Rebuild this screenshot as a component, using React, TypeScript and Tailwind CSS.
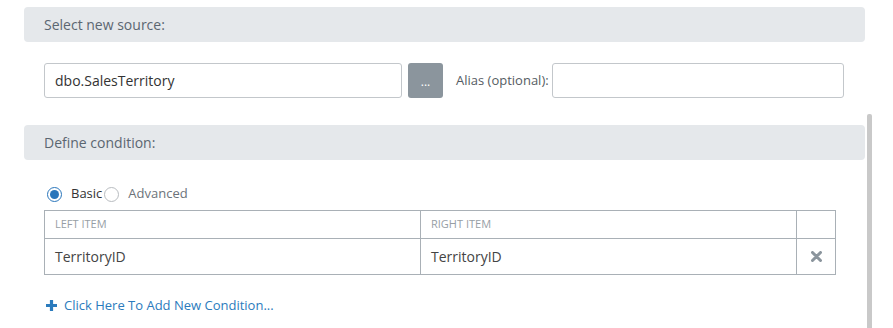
export default function App() {
  const font = { fontFamily: '"Open Sans", "Liberation Sans", sans-serif' };
  return (
    <div className="relative w-[893px] h-[328px] overflow-hidden bg-white" style={font}>
      <div className="w-[841px] ml-[24px]">
        <div className="mt-[7px] h-[35px] rounded-[4px] bg-[#e5e8eb] pl-[20px] flex items-center text-[14px] text-[#5b6671]">
          Select new source:
        </div>

        <div className="mt-[21px] flex items-center pl-[20px]">
          <div className="w-[358px] h-[35px] border border-[#c3c7cb] rounded-[3px] pl-[10px] flex items-center text-[14px] text-[#333]">
            dbo.SalesTerritory
          </div>
          <button className="ml-[6px] w-[35px] h-[35px] rounded-[3px] bg-[#8b959d] text-white text-[12px] leading-none flex items-center justify-center pt-[3px]">
            ...
          </button>
          <span className="ml-[13px] text-[13px] text-[#555c63]">Alias (optional):</span>
          <div className="ml-[3px] w-[292px] h-[35px] border border-[#c3c7cb] rounded-[3px]" />
        </div>

        <div className="mt-[27px] h-[35px] rounded-[4px] bg-[#e5e8eb] pl-[20px] flex items-center text-[14px] text-[#5b6671]">
          Define condition:
        </div>

        <div className="mt-[26px] ml-[23px] flex items-center h-[16px] text-[13px]">
          <span className="w-[15px] h-[15px] rounded-full border border-[#2a76bb] flex items-center justify-center">
            <span className="w-[9px] h-[9px] rounded-full bg-[#2a76bb]" />
          </span>
          <span className="ml-[9px] text-[#333]">Basic</span>
          <span className="ml-[2px] w-[15px] h-[15px] rounded-full border border-[#b8bcc0]" />
          <span className="ml-[9px] text-[#6c737a]">Advanced</span>
        </div>

        <div className="mt-[8px] ml-[20px] w-[792px] border border-[#a9b0b6]">
          <div className="flex h-[28px] border-b border-[#a9b0b6] text-[11px] text-[#979ea5] uppercase">
            <div className="w-[376px] pl-[10px] flex items-center border-r border-[#a9b0b6]">Left Item</div>
            <div className="w-[376px] pl-[10px] flex items-center border-r border-[#a9b0b6]">Right Item</div>
            <div className="flex-1" />
          </div>
          <div className="flex h-[35px] text-[14px] text-[#444]">
            <div className="w-[376px] pl-[10px] flex items-center border-r border-[#a9b0b6]">TerritoryID</div>
            <div className="w-[376px] pl-[10px] flex items-center border-r border-[#a9b0b6]">TerritoryID</div>
            <div className="flex-1 flex items-center justify-center">
              <svg width="11" height="11" viewBox="0 0 11 11">
                <path d="M1.5 1.5 L9.5 9.5 M9.5 1.5 L1.5 9.5" stroke="#8b959d" strokeWidth="3" strokeLinecap="round" />
              </svg>
            </div>
          </div>
        </div>

        <div className="mt-[21px] ml-[22px] flex items-center text-[13px] text-[#2b7bbd]">
          <svg width="11" height="11" viewBox="0 0 11 11">
            <path d="M5.5 0.5 V10.5 M0.5 5.5 H10.5" stroke="#2b7bbd" strokeWidth="3.2" strokeLinecap="round" />
          </svg>
          <span className="ml-[7px]">Click Here To Add New Condition...</span>
        </div>
      </div>

      <div className="absolute left-[867px] top-[114px] w-[5px] h-[214px] rounded-t-[2px] bg-[#c9c9c9]" />
    </div>
  );
}
